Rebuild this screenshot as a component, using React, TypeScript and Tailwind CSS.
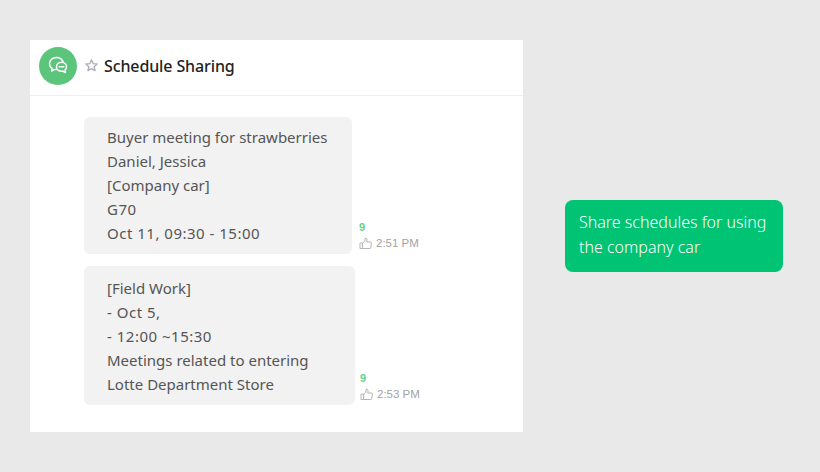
type Line = { text: string; wide?: boolean };

function Message({ lines, bubble, gap, time }: { lines: Line[]; bubble: string; gap: string; time: string }) {
  return (
    <div className="flex items-end">
      <div className={`${bubble} rounded-[6px] bg-[#f2f2f2] pl-[23px] text-[15px] leading-[24px] text-[#555555]`}>
        {lines.map((line) => (
          <div key={line.text} className={line.wide ? "whitespace-nowrap tracking-[0.5px]" : "whitespace-nowrap"}>
            {line.text}
          </div>
        ))}
      </div>
      <div className={`${gap} mb-[3px] flex flex-col`}>
        <span className="text-[11px] leading-[14px] font-bold text-[#5fd38a] font-['Liberation_Sans',sans-serif]">9</span>
        <div className="mt-[1px] flex items-center gap-[4px]">
          <svg width="13" height="13" viewBox="0 0 13 13" fill="none" stroke="#b4b4b4" strokeWidth="1" strokeLinejoin="round">
            <path d="M1 6h2.5v5.5H1z" />
            <path d="M3.5 6l2.2-1.6.6-3.4c1 0 1.7.7 1.7 1.8L7.7 5h3.8c.6 0 .9.4.9 1l-.6 4.6c-.1.6-.4.9-1 .9H3.5" />
          </svg>
          <span className="text-[11.5px] leading-[16px] text-[#a3a3a3] font-['Liberation_Sans',sans-serif]">{time}</span>
        </div>
      </div>
    </div>
  );
}

export default function App() {
  return (
    <div className="flex h-[472px] w-[820px] bg-[#e9e9e9] pl-[30px] pt-[40px] font-['Noto_Sans',sans-serif]">
      <div className="h-[392px] w-[493px] bg-white">
        <div className="flex h-[56px] items-center border-b border-[#eeeeee] pb-[4px] pl-[9px]">
          <div className="flex h-[38px] w-[38px] items-center justify-center rounded-full bg-[#5cc57c]">
            <svg width="22" height="20" viewBox="0 0 22 20" fill="none" stroke="white" strokeWidth="1.5" strokeLinecap="round" strokeLinejoin="round">
              <path d="M9.5 1.5c-4 0-7 2.7-7 6.2 0 2 1 3.7 2.6 4.8l-.5 2.6 3.2-1.7c.6.1 1.2.2 1.8.2" />
              <path d="M9.5 1.5c3 0 5.6 1.7 6.6 4.2" />
              <path d="M14.5 6.2c2.9 0 5 2 5 4.5 0 1.3-.6 2.5-1.5 3.3l.4 2.5-2.7-1.4c-.4.1-.8.1-1.2.1-2.9 0-5-2-5-4.5s2.1-4.5 5-4.5z" fill="#5cc57c" />
              <path d="M12.2 10.8h4.6" />
            </svg>
          </div>
          <svg className="ml-[7px]" width="15" height="15" viewBox="0 0 24 24" fill="none" stroke="#aeaeb6" strokeWidth="2.2" strokeLinejoin="round">
            <path d="M12 3l2.7 5.9 6.3.7-4.7 4.3 1.3 6.4L12 17.1l-5.6 3.2 1.3-6.4L3 9.6l6.3-.7z" />
          </svg>
          <span className="ml-[5px] text-[16px] font-medium tracking-[-0.12px] text-[#222222]">Schedule Sharing</span>
        </div>
        <div className="flex flex-col gap-[12px] pl-[54px] pt-[21px]">
          <Message
            bubble="w-[268px] pt-[8px] pb-[9px]"
            gap="ml-[7px]"
            time="2:51 PM"
            lines={[
              { text: "Buyer meeting for strawberries" },
              { text: "Daniel, Jessica" },
              { text: "[Company car]" },
              { text: "G70", wide: true },
              { text: "Oct 11, 09:30 - 15:00", wide: true },
            ]}
          />
          <Message
            bubble="w-[271px] pt-[10px] pb-[9px]"
            gap="ml-[5px]"
            time="2:53 PM"
            lines={[
              { text: "[Field Work]" },
              { text: "- Oct 5,", wide: true },
              { text: "- 12:00 ~15:30", wide: true },
              { text: "Meetings related to entering" },
              { text: "Lotte Department Store" },
            ]}
          />
        </div>
      </div>
      <div className="ml-[42px] mt-[160px] h-[72px] w-[218px] rounded-[8px] bg-[#00c473] px-[14px] py-[10px] text-[16px] font-light leading-[25px] whitespace-nowrap text-white">
        Share schedules for using
        <br />
        the company car
      </div>
    </div>
  );
}
